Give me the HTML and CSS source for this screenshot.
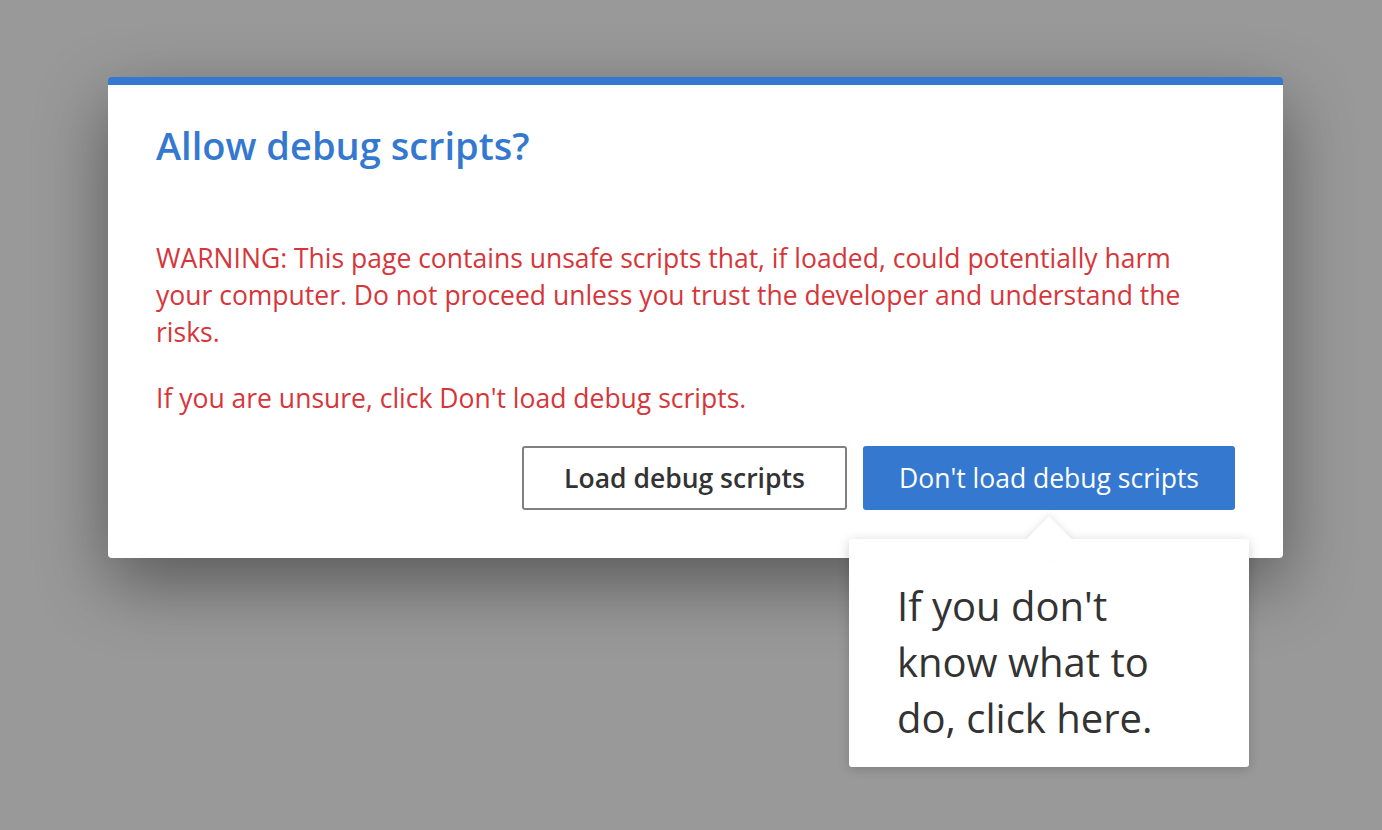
FILE: index.html
```html
<!DOCTYPE html>
<html lang="en">
<head>
    <meta charset="UTF-8">
    <meta name="viewport" content="width=device-width, initial-scale=1.0">
    <title>Allow debug scripts?</title>
    <link rel="stylesheet" href="styles.css">
</head>
<body>

    <div class="dialog">
        <h1 class="dialog-title">Allow debug scripts?</h1>

        <p class="warning">WARNING: This page contains unsafe scripts that, if loaded, could potentially harm<br>
            your computer. Do not proceed unless you trust the developer and understand the<br>
            risks.</p>
        <p class="warning">If you are unsure, click Don't load debug scripts.</p>

        <div class="actions">
            <button class="btn btn-secondary">Load debug scripts</button>
            <div class="btn-wrap">
                <button class="btn btn-primary">Don't load debug scripts</button>
                <!-- Teaching tip under the safe option -->
                <div class="tip">If you don't<br>know what to<br>do, click here.</div>
            </div>
        </div>
    </div>

</body>
</html>
```

FILE: styles.css
```css
html {
    background-color: #999999;
}
body {
    font-family: "Segoe UI", "Open Sans", sans-serif;
    background-color: #999999;
    margin: 0;
    padding: 1px 0 0;
    min-height: 100vh;
    box-sizing: border-box;
    color: #333;
}
.dialog {
    width: 1175px;
    margin: 76px 0 0 108px;
    box-sizing: border-box;
    background: #fff;
    border-top: 8px solid #3478cf;
    border-radius: 4px;
    padding: 37px 48px 48px;
    box-shadow: 0 25px 70px rgba(0, 0, 0, 0.42);
}
.dialog-title {
    margin: 0 0 72px;
    font-size: 38px;
    font-weight: 600;
    line-height: 46px;
    color: #3478cf;
}
.warning {
    margin: 0 0 29px;
    font-size: 26.5px;
    line-height: 37px;
    color: #d6363a;
}
.actions {
    display: flex;
    justify-content: flex-end;
    gap: 16px;
    margin-top: 29px;
}
.btn-wrap {
    position: relative;
}
.btn {
    height: 64px;
    font-family: inherit;
    font-size: 26.5px;
    border-radius: 3px;
    cursor: pointer;
    box-sizing: border-box;
}
.btn-secondary {
    width: 325px;
    background: #fff;
    color: #333;
    font-weight: 600;
    border: 2px solid #808080;
}
.btn-primary {
    width: 372px;
    background: #3478cf;
    color: #fff;
    border: none;
}
/* Tooltip */
.tip {
    position: absolute;
    top: calc(100% + 29px);
    left: -14px;
    width: 400px;
    height: 228px;
    box-sizing: border-box;
    padding: 39px 48px;
    background: #fff;
    border-radius: 3px;
    font-size: 40px;
    line-height: 56px;
    color: #333;
    box-shadow: 0 2px 12px rgba(0, 0, 0, 0.18);
}
.tip::before {
    content: "";
    position: absolute;
    top: -16px;
    left: 184px;
    width: 32px;
    height: 32px;
    background: #fff;
    transform: rotate(45deg);
    box-shadow: -2px -2px 6px rgba(0, 0, 0, 0.08);
}
.tip::after {
    content: "";
    position: absolute;
    top: 0;
    left: 170px;
    width: 60px;
    height: 20px;
    background: #fff;
}
```
